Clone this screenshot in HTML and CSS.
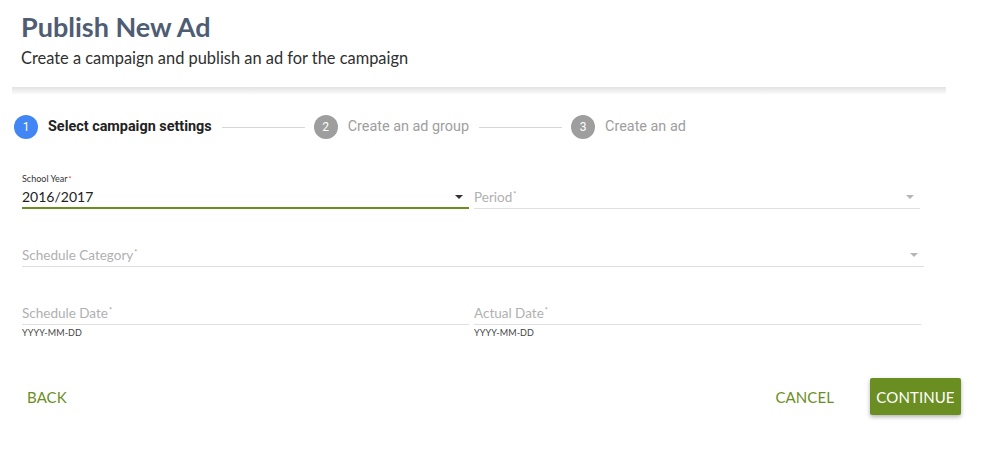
FILE: index.html
```html
<!DOCTYPE html>
<html>
<head>
<meta charset="utf-8">
<link rel="stylesheet" href="styles.css">
</head>
<body>
<div class="page">
  <header class="header">
    <h1 class="title">Publish New Ad</h1>
    <p class="subtitle">Create a campaign and publish an ad for the campaign</p>
  </header>
  <div class="band"></div>

  <div class="stepper">
    <div class="step active"><span class="num">1</span><span class="step-label">Select campaign settings</span></div>
    <div class="connector"></div>
    <div class="step"><span class="num">2</span><span class="step-label">Create an ad group</span></div>
    <div class="connector"></div>
    <div class="step"><span class="num">3</span><span class="step-label">Create an ad</span></div>
  </div>

  <form class="form">
    <div class="row row-1">
      <div class="field field-left">
        <div class="label">School Year<sup class="req red">*</sup></div>
        <div class="control focused"><span class="value">2016/2017</span><span class="arrow dark"></span></div>
      </div>
      <div class="field field-right">
        <div class="control"><span class="placeholder">Period<sup class="req">*</sup></span><span class="arrow"></span></div>
      </div>
    </div>

    <div class="row row-2">
      <div class="field field-full">
        <div class="control"><span class="placeholder">Schedule Category<sup class="req">*</sup></span><span class="arrow"></span></div>
      </div>
    </div>

    <div class="row row-3">
      <div class="field field-left">
        <div class="control"><span class="placeholder">Schedule Date<sup class="req">*</sup></span></div>
        <div class="helper">YYYY-MM-DD</div>
      </div>
      <div class="field field-right narrow">
        <div class="control"><span class="placeholder">Actual Date<sup class="req">*</sup></span></div>
        <div class="helper">YYYY-MM-DD</div>
      </div>
    </div>
  </form>

  <div class="actions">
    <button class="btn flat" type="button">BACK</button>
    <div class="actions-right">
      <button class="btn flat" type="button">CANCEL</button>
      <button class="btn raised" type="button">CONTINUE</button>
    </div>
  </div>
</div>
</body>
</html>
```

FILE: styles.css
```css
* { box-sizing: border-box; }
html, body { margin: 0; padding: 0; background: #fff; }
body { font-family: "Lato", "Liberation Sans", sans-serif; color: #333; width: 990px; height: 456px; overflow: hidden; }

.header { padding: 0 21px; }
.title {
  margin: 10px 0 0;
  font-size: 27px;
  line-height: 34px;
  font-weight: 700;
  color: #4e5d73;
}
.subtitle {
  margin: 4px 0 0;
  font-size: 16.4px;
  line-height: 20px;
  color: #2f2f2f;
}

.band {
  margin: 19px 0 0 12px;
  width: 934px;
  height: 8px;
  background: linear-gradient(to bottom, #e2e2e2, #f6f6f6 70%, #ffffff);
}

.stepper {
  display: flex;
  align-items: center;
  margin: 20px 0 0 14px;
  font-family: "Roboto", "Liberation Sans", sans-serif;
  font-size: 14.4px;
}
.step { display: flex; align-items: center; }
.num {
  width: 24px; height: 24px;
  border-radius: 50%;
  background: #9e9e9e;
  color: #fff;
  font-size: 12px;
  display: flex; align-items: center; justify-content: center;
}
.step.active .num { background: #4285f4; }
.step-label { margin-left: 10px; color: #9e9e9e; line-height: 24px; }
.step.active .step-label { color: #222; font-weight: 700; }
.connector { width: 83px; height: 1px; background: #d6d6d6; margin: 0 9px 0 10px; }

.form { padding-left: 22px; margin-top: 34px; }
.row { display: flex; gap: 5px; }
.row-1 { align-items: flex-end; }
.row-2 { margin-top: 34px; }
.row-3 { margin-top: 34px; }

.field-left { width: 447px; }
.field-right { width: 446px; }
.field-right.narrow { width: 447px; }
.field-full { width: 902px; }

.label { font-size: 9px; line-height: 12px; color: #333; height: 12px; }
.req { font-size: 7px; vertical-align: top; position: relative; top: 0; margin-left: 1px; color: #9e9e9e; }
.req.red { color: #e53935; top: 0; }

.control {
  display: flex;
  align-items: center;
  justify-content: space-between;
  height: 24px;
  border-bottom: 1px solid #e0e0e0;
  padding-right: 6px;
}
.control.focused { border-bottom: 2px solid #6b8e23; height: 24px; padding-top: 1px; }
.value { font-size: 14px; color: #222; }
.placeholder { font-size: 13.5px; color: #b0b0b0; }
.placeholder .req { font-size: 7px; margin-left: 1px; top: 1px; }

.arrow {
  width: 0; height: 0;
  border-left: 4px solid transparent;
  border-right: 4px solid transparent;
  border-top: 4px solid #b5b5b5;
}
.arrow.dark { border-top-color: #333; }

.helper { font-size: 9px; line-height: 12px; margin-top: 2px; color: #444; letter-spacing: 0.1px; }

.actions {
  display: flex;
  justify-content: space-between;
  align-items: center;
  margin-top: 39px;
  padding: 0 29px 0 19px;
}
.actions-right { display: flex; align-items: center; gap: 28px; }
.btn {
  font-family: "Lato", "Liberation Sans", sans-serif;
  font-size: 15px;
  border: none;
  background: none;
  padding: 0 8px;
  height: 37px;
  cursor: pointer;
  color: #6b8e23;
  letter-spacing: 0.1px;
}
.btn.raised {
  background: #6b8e23;
  color: #fff;
  border-radius: 2px;
  width: 91px;
  padding: 0;
  box-shadow: 0 2px 4px rgba(0,0,0,0.3);
}
```
